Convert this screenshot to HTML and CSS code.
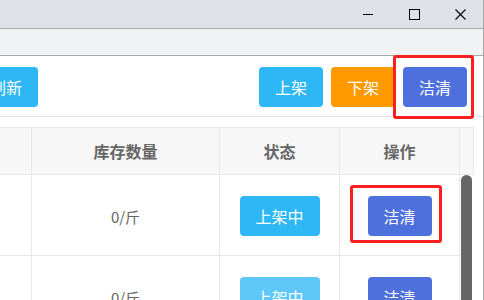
FILE: index.html
```html
<!DOCTYPE html>
<html lang="zh">
<head>
<meta charset="utf-8">
<link rel="stylesheet" href="styles.css">
</head>
<body>
<div class="window">
  <div class="titlebar">
    <div class="ctl"><span class="ic-min"></span></div>
    <div class="ctl"><span class="ic-max"></span></div>
    <div class="ctl">
      <svg width="11" height="11" viewBox="0 0 11 11"><path d="M0.5 0.5L10.5 10.5M10.5 0.5L0.5 10.5" stroke="#000" stroke-width="1.1" fill="none"/></svg>
    </div>
  </div>
  <div class="menubar"></div>
  <div class="toolbar">
    <button class="btn info refresh">刷新</button>
    <div class="actions">
      <button class="btn info">上架</button>
      <button class="btn warn">下架</button>
      <button class="btn primary mark">洁清</button>
    </div>
  </div>
  <div class="table">
    <div class="thead">
      <div class="th"></div>
      <div class="th">库存数量</div>
      <div class="th">状态</div>
      <div class="th">操作</div>
      <div class="th gutter"></div>
    </div>
    <div class="tbody">
      <div class="rows">
        <div class="tr">
          <div class="td"></div>
          <div class="td">0/斤</div>
          <div class="td"><button class="btn info wide">上架中</button></div>
          <div class="td"><button class="btn primary mark2">洁清</button></div>
        </div>
        <div class="tr">
          <div class="td"></div>
          <div class="td">0/斤</div>
          <div class="td"><button class="btn info light wide">上架中</button></div>
          <div class="td"><button class="btn primary">洁清</button></div>
        </div>
      </div>
      <div class="scroll"><div class="thumb"></div></div>
    </div>
  </div>
</div>
</body>
</html>
```

FILE: styles.css
```css
* { box-sizing: border-box; }
html, body { margin: 0; padding: 0; }
body {
  width: 484px;
  height: 300px;
  overflow: hidden;
  background: #fff;
  font-family: "Noto Sans CJK SC", "Noto Sans", sans-serif;
}
.window {
  width: 484px;
  height: 300px;
  border-right: 1px solid #a9a9a9;
  overflow: hidden;
}
.titlebar {
  height: 29px;
  background: #dee1e6;
  border-bottom: 1px solid #a9a9a9;
  display: flex;
  justify-content: flex-end;
}
.ctl {
  width: 46px;
  height: 28px;
  display: flex;
  align-items: center;
  justify-content: center;
}
.ic-min { width: 10px; height: 1px; background: #000; }
.ic-max { width: 11px; height: 11px; border: 1px solid #000; }
.menubar {
  height: 27px;
  background: #f1f2f4;
  border-bottom: 1px solid #a9a9a9;
}
.toolbar {
  height: 61px;
  padding: 11px 16px 9px 0;
  border-bottom: 1px solid #e3e3e3;
  display: flex;
  justify-content: space-between;
}
.actions { display: flex; gap: 8px; }
.btn {
  height: 40px;
  width: 64px;
  border: 0;
  border-radius: 4px;
  color: #fff;
  font-family: "Noto Sans CJK SC", "Noto Sans", sans-serif;
  font-size: 16px;
  padding: 0;
  position: relative;
}
.btn.wide { width: 80px; }
.info { background: #2db7f5; }
.info.light { background: #5ec7f7; }
.warn { background: #ff9900; }
.primary { background: #4d70dd; }
.refresh { margin-left: -26px; }
.mark::after, .mark2::after {
  content: "";
  position: absolute;
  border: 3px solid #fb1f1f;
  border-radius: 3px;
}
.mark::after { left: -10px; top: -12px; right: -7px; bottom: -12px; }
.mark2::after { left: -18px; top: -11px; right: -10px; bottom: -7px; }
.table {
  margin-top: 10px;
  width: 474px;
  border-top: 1px solid #e8e8e8;
}
.thead {
  display: grid;
  grid-template-columns: 32px 188px 120px 120px 14px;
  background: #f7f7f7;
}
.th {
  height: 47px;
  border-right: 1px solid #e8e8e8;
  border-bottom: 1px solid #e8e8e8;
  display: flex;
  align-items: center;
  justify-content: center;
  color: #666;
  font-size: 16px;
  font-weight: 700;
}
.tbody { display: flex; }
.rows { width: 460px; }
.tr {
  display: grid;
  grid-template-columns: 32px 188px 120px 120px;
}
.td {
  height: 81px;
  border-right: 1px solid #e8e8e8;
  border-bottom: 1px solid #e8e8e8;
  display: flex;
  align-items: center;
  justify-content: center;
  color: #666;
  font-size: 15px;
  padding-top: 2px;
}
.scroll {
  width: 14px;
  padding-left: 1px;
}
.thumb {
  width: 11px;
  height: 200px;
  background: #666;
  border-radius: 6px 6px 0 0;
}
```
